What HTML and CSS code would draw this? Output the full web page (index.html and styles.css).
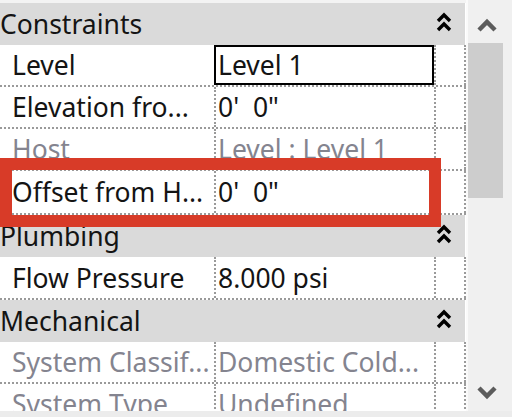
FILE: index.html
```html
<!DOCTYPE html>
<html lang="en">
<head>
  <meta charset="UTF-8">
  <title>Properties</title>
  <link rel="stylesheet" href="styles.css">
</head>
<body>
  <div class="panel">
    <div class="grid">
      <div class="topgap"></div>

      <div class="group">
        <span>Constraints</span>
        <svg class="collapse" width="16" height="22" viewBox="0 0 16 22"><path d="M2 10 L8 4 L14 10 M2 19 L8 13 L14 19" fill="none" stroke="#000" stroke-width="3.4"/></svg>
      </div>
      <div class="row">
        <div class="name">Level</div>
        <div class="value active">Level 1</div>
        <div class="extra"></div>
      </div>
      <div class="row">
        <div class="name">Elevation fro...</div>
        <div class="value">0'&nbsp; 0"</div>
        <div class="extra"></div>
      </div>
      <div class="row off">
        <div class="name">Host</div>
        <div class="value">Level : Level 1</div>
        <div class="extra"></div>
      </div>
      <div class="row tall">
        <div class="name">Offset from H...</div>
        <div class="value">0'&nbsp; 0"</div>
        <div class="extra"></div>
        <div class="mark"></div>
      </div>

      <div class="group">
        <span>Plumbing</span>
        <svg class="collapse" width="16" height="22" viewBox="0 0 16 22"><path d="M2 10 L8 4 L14 10 M2 19 L8 13 L14 19" fill="none" stroke="#000" stroke-width="3.4"/></svg>
      </div>
      <div class="row mid">
        <div class="name">Flow Pressure</div>
        <div class="value">8.000 psi</div>
        <div class="extra"></div>
      </div>

      <div class="group">
        <span>Mechanical</span>
        <svg class="collapse" width="16" height="22" viewBox="0 0 16 22"><path d="M2 10 L8 4 L14 10 M2 19 L8 13 L14 19" fill="none" stroke="#000" stroke-width="3.4"/></svg>
      </div>
      <div class="row off">
        <div class="name">System Classif...</div>
        <div class="value">Domestic Cold...</div>
        <div class="extra"></div>
      </div>
      <div class="row off">
        <div class="name">System Type</div>
        <div class="value">Undefined</div>
        <div class="extra"></div>
      </div>
    </div>

    <div class="scrollbar">
      <div class="arrow up">
        <svg width="22" height="16" viewBox="0 0 22 16"><path d="M3 13 L11 5 L19 13" fill="none" stroke="#5c5c5c" stroke-width="4.5"/></svg>
      </div>
      <div class="thumb"></div>
      <div class="track"></div>
      <div class="arrow down">
        <svg width="22" height="16" viewBox="0 0 22 16"><path d="M3 3 L11 11 L19 3" fill="none" stroke="#5c5c5c" stroke-width="4.5"/></svg>
      </div>
    </div>
  </div>
  <div class="hbar"></div>
</body>
</html>
```

FILE: styles.css
```css
body {
  margin: 0;
  background: #fff;
  font-family: 'Noto Sans', 'Open Sans', sans-serif;
  font-size: 26.5px;
  color: #141414;
  overflow: hidden;
}
.panel {
  display: flex;
  height: 411px;
  overflow: hidden;
}
.grid {
  width: 466px;
  flex: none;
}
.topgap {
  height: 3px;
  background: #f3f3f3;
}
.group {
  height: 42px;
  width: 465px;
  background: #dadada;
  display: flex;
  align-items: center;
  justify-content: space-between;
  padding-right: 13px;
  box-sizing: border-box;
  white-space: nowrap;
}
.collapse { margin-top: -4px; }
.row {
  position: relative;
  height: 42px;
  box-sizing: border-box;
  display: flex;
  border-bottom: 2px dotted #9a9a9a;
  white-space: nowrap;
}
.row.tall { height: 44px; }
.row.mid { height: 43px; }
.name, .value, .extra {
  display: flex;
  align-items: center;
  overflow: hidden;
}
.name {
  width: 214px;
  padding-left: 12px;
  box-sizing: border-box;
}
.value {
  width: 222px;
  padding-left: 2px;
  box-sizing: border-box;
  border-left: 2px dotted #9a9a9a;
  border-right: 2px dotted #9a9a9a;
}
.value.active {
  border-left: 2px solid #000;
  box-shadow: inset 0 2px 0 #000, inset -2px 0 0 #000, inset 0 -2px 0 #000;
}
.extra {
  width: 30px;
  box-sizing: border-box;
  border-right: 2px dotted #9a9a9a;
}
.off .name, .off .value { color: #84848f; }
.mark {
  position: absolute;
  left: 0;
  top: -13px;
  width: 441px;
  height: 69px;
  border: 12px solid #d83b28;
  box-sizing: border-box;
  pointer-events: none;
}
.scrollbar {
  flex: 1;
  display: flex;
  flex-direction: column;
  background: #f0f0f0;
  border-left: 2px solid #fafafa;
}
.arrow {
  display: flex;
  justify-content: center;
  padding-right: 6px;
}
.arrow.up { height: 43px; align-items: center; padding-top: 6px; box-sizing: border-box; }
.arrow.down { height: 36px; align-items: center; }
.thumb {
  height: 155px;
  width: 35px;
  background: #cdcdcd;
}
.track { flex: 1; }
.hbar {
  height: 6px;
  background: #ececec;
}
```
